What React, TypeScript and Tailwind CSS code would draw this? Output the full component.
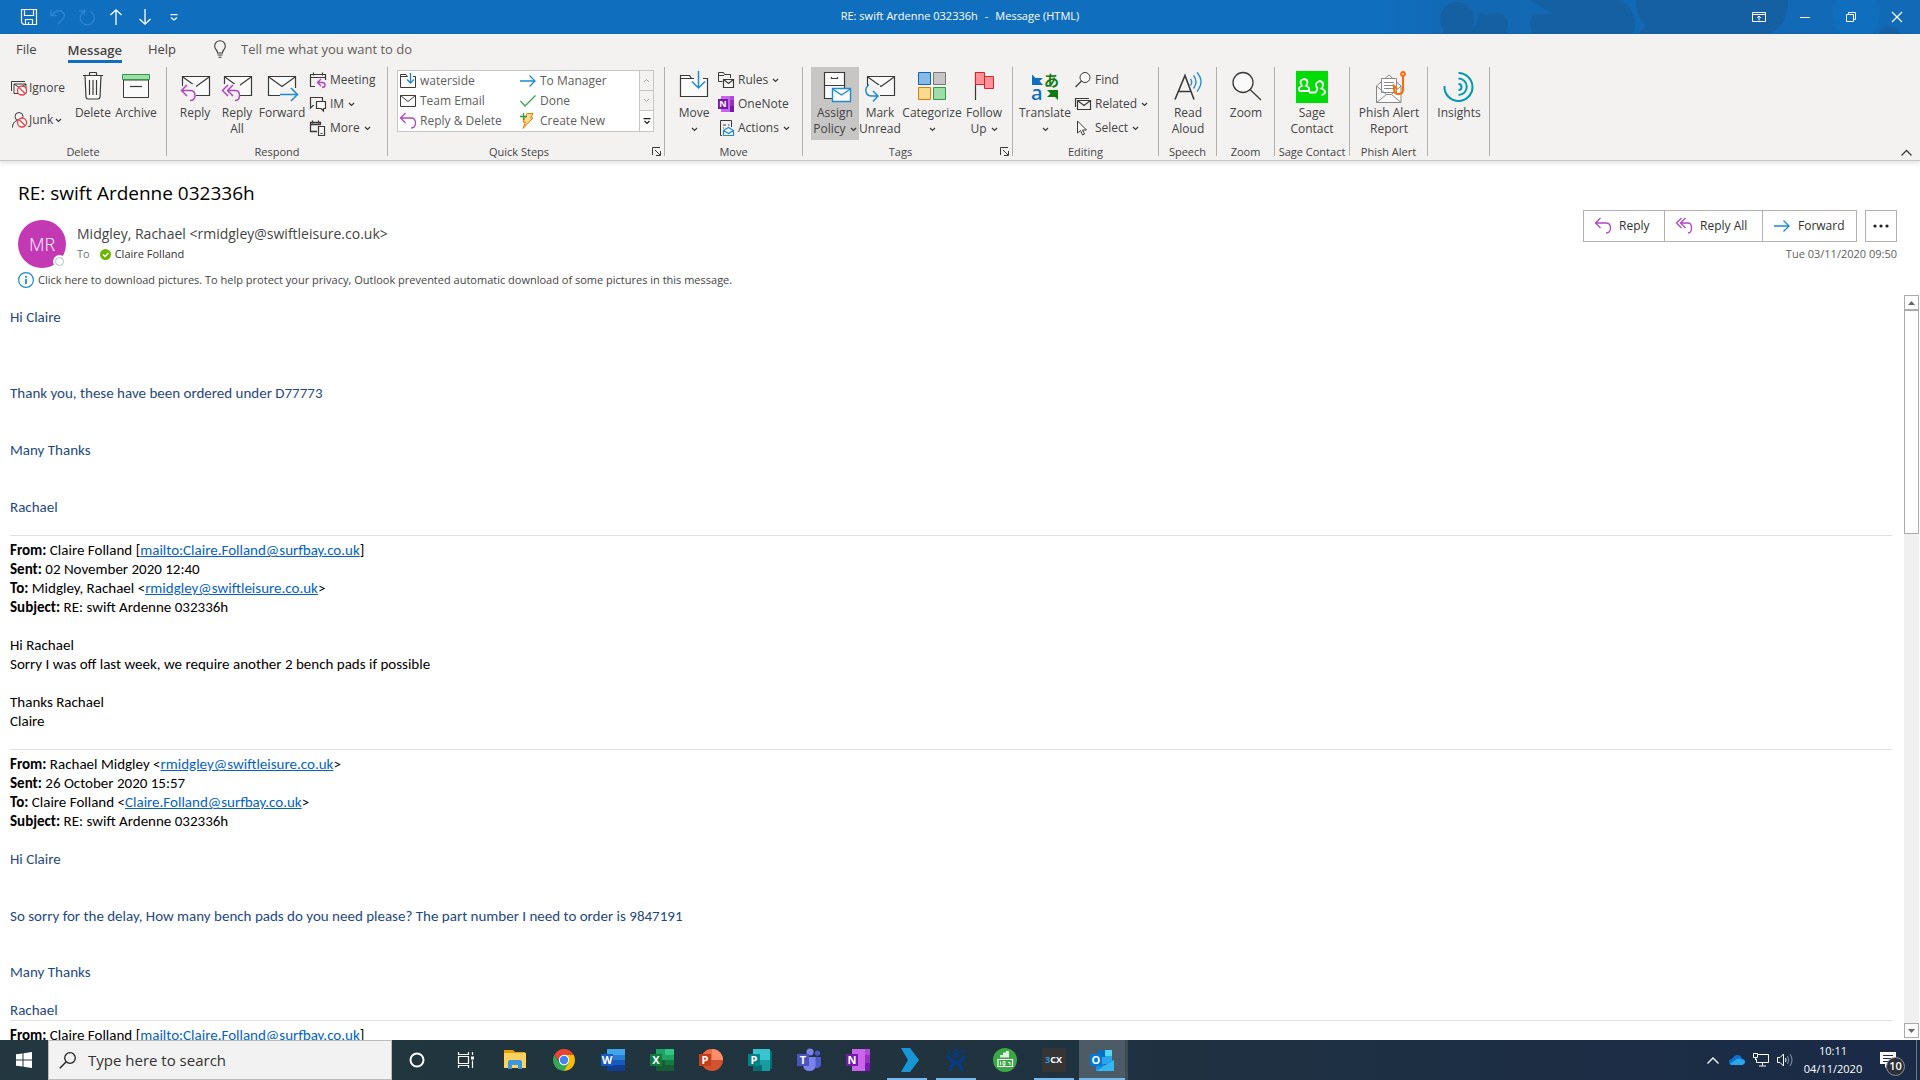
import React from "react";

type Kids = { children?: React.ReactNode };

const INK = "#3b3a39";
const PURPLE = "#b146c2";
const BLUE = "#1e8bcd";

function Svg({ w, h, children }: { w: number; h: number } & Kids) {
  return (
    <svg width={w} height={h} viewBox={`0 0 ${w} ${h}`} fill="none" className="shrink-0 overflow-visible" aria-hidden="true">
      {children}
    </svg>
  );
}

function Chevron() {
  return (
    <Svg w={7} h={5}>
      <path d="M1 1l2.500 2.500L6 1" stroke={INK} strokeWidth="1.2" />
    </Svg>
  );
}

/* ---------- large ribbon icons (32 x 32) ---------- */

const TrashIcon = () => (
  <Svg w={32} h={32}>
    <path d="M8 5.500h16l-1 20.500q-.2 2-2 2H11q-1.800 0-2-2z" fill="#fafafa" />
    <path d="M6 4.500h20M12.500 4V2q0-.5.500-.5h6q.5 0 .5.500v2M8 5l1 21q.2 2 2 2h10q1.800 0 2-2l1-21M12.500 9v15M16 9v15M19.500 9v15" stroke={INK} strokeWidth="1.200" />
  </Svg>
);
const ArchiveIcon = () => (
  <Svg w={32} h={32}>
    <path d="M3.500 9h25v17.500h-25z" fill="#fafafa" stroke={INK} />
    <path d="M2.500 3.500h27v5h-27z" fill="#a0dca7" stroke="#2e9a47" />
    <path d="M10 15.500h12" stroke={INK} strokeWidth="1.200" />
  </Svg>
);
const EnvelopeBig = ({ x = 3 }: { x?: number }) => (
  <g transform={`translate(${x} 5)`}>
    <path d="M.5.500h27v19H.500z" fill="#fafafa" stroke={INK} strokeWidth="1.200" />
    <path d="M.5.800L14 10.500 27.500.800" stroke={INK} strokeWidth="1.200" />
  </g>
);
const ReplyBig = () => (
  <Svg w={32} h={32}>
    <EnvelopeBig />
    <path d="M0 13h17v17H0z" fill="#f3f2f1" />
    <path d="M3.500 13v2M17 24.500h3" stroke={INK} />
    <path d="M8 14l-5.500 5.500L8 25M2.500 19.500H11q5 0 5 5t-5 5" stroke={PURPLE} strokeWidth="1.500" />
  </Svg>
);
const ReplyAllBig = () => (
  <Svg w={32} h={32}>
    <EnvelopeBig />
    <path d="M0 13h19v17H0z" fill="#f3f2f1" />
    <path d="M7 14l-5.500 5.500L7 25M12 14l-5.500 5.500L12 25M6.500 19.500H14q4.500 0 4.500 5t-4.500 5" stroke={PURPLE} strokeWidth="1.500" />
  </Svg>
);
const ForwardBig = () => (
  <Svg w={32} h={32}>
    <EnvelopeBig x={2} />
    <path d="M14 17h18v14H14z" fill="#f3f2f1" />
    <path d="M29.500 13v4M2 24.500h12" stroke={INK} />
    <path d="M14 23.500h17M25 17l6.500 6.500L25 30" stroke={BLUE} strokeWidth="1.500" />
  </Svg>
);
const MoveBig = () => (
  <Svg w={32} h={32}>
    <path d="M2.500 25.500v-21h9l2 3h16v18z" fill="#fafafa" stroke={INK} strokeWidth="1.200" />
    <path d="M2.500 7.500h11" stroke={INK} />
    <path d="M16 4h9v4h-9z" fill="#f3f2f1" />
    <path d="M20.500 0v17M14 10.500l6.500 6.500 6.500-6.500" stroke={BLUE} strokeWidth="1.500" />
  </Svg>
);
const PolicyBig = () => (
  <Svg w={32} h={32}>
    <path d="M5.500 1.500h20v26h-20zM5.500 14.500h20" fill="#fafafa" stroke={INK} strokeWidth="1.200" />
    <path d="M12.500 6v1.500h6V6" stroke={INK} strokeWidth="1.200" />
    <path d="M13.500 17.500h18v13h-18z" fill="#fafafa" stroke={BLUE} strokeWidth="1.400" />
    <path d="M13.500 18l9 6 9-6" stroke={BLUE} strokeWidth="1.400" />
  </Svg>
);
const UnreadBig = () => (
  <Svg w={32} h={32}>
    <EnvelopeBig />
    <path d="M0 14h16v18H0z" fill="#f3f2f1" />
    <path d="M3.500 13v3" stroke={INK} />
    <path d="M5 13.500q-4 3.500-3 7.500t6 4h5M9 20l5 5-5 5.500" stroke={BLUE} strokeWidth="1.500" />
  </Svg>
);
const CategorizeBig = () => (
  <Svg w={32} h={32}>
    <path d="M2.500 1.500h12v12h-12z" fill="#83bceb" stroke="#1565a8" />
    <path d="M17.500 1.500h12v12h-12z" fill="#c8c6c4" stroke="#797775" />
    <path d="M2.500 16.500h12v12h-12z" fill="#f8db8f" stroke="#e07b00" />
    <path d="M17.500 16.500h12v12h-12z" fill="#a0dca7" stroke="#2e9a47" />
  </Svg>
);
const FlagBig = () => (
  <Svg w={32} h={32}>
    <path d="M7.500 1v28" stroke={INK} strokeWidth="1.200" />
    <path d="M7.500 1.500h9v4h9v12h-9v-4h-9zM16.500 5v9" fill="#ff9199" stroke="#d9222a" />
  </Svg>
);
const TranslateBig = () => (
  <Svg w={32} h={32}>
    <path d="M3 3.500l3.500 3.500H14l-3.500 3L14 14H3z" fill="#106ebe" />
    <path d="M18 19h11v10l-3-3h-8l3.500-3.500z" fill="#107c10" />
    <text x="2" y="29" fontSize="20" fontWeight="600" fill="#106ebe" fontFamily="Open Sans, sans-serif">a</text>
    <text x="15" y="15" fontSize="15" fontWeight="700" fill="#107c10" fontFamily="Noto Sans CJK JP, sans-serif">あ</text>
  </Svg>
);
const ReadAloudBig = () => (
  <Svg w={32} h={32}>
    <path d="M3 28.500L13 4.500l9 24M6.500 20.500h12.500" stroke={INK} strokeWidth="1.600" />
    <path d="M18.500 8q2.500 3 0 6.500M21.500 4.500q5 6 0 13M25 1.500q8 9 0 19" stroke={BLUE} strokeWidth="1.300" />
  </Svg>
);
const ZoomBig = () => (
  <Svg w={32} h={32}>
    <circle cx="13" cy="11.500" r="10" fill="#fafafa" stroke={INK} strokeWidth="1.300" />
    <path d="M20 18.500L31 29" stroke={INK} strokeWidth="1.300" />
  </Svg>
);
const SageBig = () => (
  <Svg w={32} h={32}>
    <path d="M0 0h32v32H0z" fill="#00dc06" />
    <path d="M3 20v-2.500q0-1.500 3-2.500-1.500-2-1.500-4T8 8q3.500.5 3.500 3T10 15q3 1 3 2.500V20H3M13 21.500h6.500q1.500-2 2-4-1.500-2-1.500-4t3.500-3.500q3.500.5 3.500 3.500t-1.500 4q3.500 1.500 3.500 3.500T25.500 24" stroke="#fff" strokeWidth="1.800" />
  </Svg>
);
const PhishBig = () => (
  <Svg w={32} h={32}>
    <path d="M3.500 15L16 4l12 11v16.500H3.500z" fill="#fafafa" stroke="#8a8886" />
    <path d="M8.500 7.500h15v14h-15z" fill="#fff" stroke="#8a8886" />
    <path d="M11 11.500h10M11 14.500h10M11 17.500h10M3.500 15l10 8.500h5l9.500-8.500M3.500 31.500l10-8M28 31.500l-9.500-8" stroke="#8a8886" />
    <circle cx="30" cy="3" r="2" stroke="#ff6a00" strokeWidth="1.800" />
    <path d="M30 5v13.500q0 4.500-4.500 4.500T21 18.500V15l3 3" stroke="#ff6a00" strokeWidth="2" />
  </Svg>
);
const InsightsBig = () => (
  <Svg w={32} h={32}>
    <path d="M1.500 15A14 14 0 1 0 15.500 2" stroke="#0099b0" strokeWidth="2" />
    <path d="M15.500 7.500a8 8 0 0 1 0 16.500M15.500 13a3 3 0 0 1 0 6" stroke="#0099b0" strokeWidth="2" />
  </Svg>
);

/* ---------- small icons (16 x 16) ---------- */

const Ban = () => (
  <g>
    <circle cx="11" cy="10.500" r="4.500" fill="#fafafa" stroke="#e8404a" strokeWidth="1.300" />
    <path d="M8 7.500l6 6" stroke="#e8404a" strokeWidth="1.300" />
  </g>
);
const IgnoreIcon = () => (
  <Svg w={16} h={16}>
    <path d="M.5 11V1.500H14M3 13.500V4h12v9.500zM3 4l6 4 6-4" stroke={INK} />
    <Ban />
  </Svg>
);
const JunkIcon = () => (
  <Svg w={16} h={16}>
    <circle cx="8" cy="4.500" r="4" stroke={INK} />
    <path d="M1.500 15.500q0-5.500 4.500-7" stroke={INK} />
    <Ban />
  </Svg>
);
const MeetingIcon = () => (
  <Svg w={16} h={16}>
    <path d="M5 14.500H.5v-12h15V8M.500 5.500h15M3.500.500v3M12.500.500v3" stroke={INK} strokeWidth="1.200" />
    <path d="M11 7l-3.500 3.500L11 14M8 10.500h4q3 0 3 2.500t-3 2.500" stroke={PURPLE} strokeWidth="1.400" />
  </Svg>
);
const ImIcon = () => (
  <Svg w={16} h={16}>
    <path d="M4 9.500H3L.5 12V1.500h12V5" stroke={INK} strokeWidth="1.200" />
    <path d="M6.500 5.500h9v7h-2V15L11 12.500H6.500z" fill="#fafafa" stroke={INK} strokeWidth="1.200" />
  </Svg>
);
const MoreIcon = () => (
  <Svg w={16} h={16}>
    <path d="M7 11.500H.5v-9h10V5M.500 4.500h10M2.500.500v3M8.500.500v3" stroke={INK} strokeWidth="1.300" />
    <path d="M8.500 6.500h6v9h-6zM10.500 13.500h2" fill="#fafafa" stroke={INK} strokeWidth="1.200" />
  </Svg>
);
const FolderSmall = () => (
  <Svg w={16} h={16}>
    <path d="M7.500 3.500L6 1.500H.500v13h15V3.500H13M.500 3.500h7" stroke={INK} />
    <path d="M10.500 0v10M7 6.500l3.500 3.500L14 6.500" stroke={BLUE} strokeWidth="1.400" />
  </Svg>
);
const MailSmall = () => (
  <Svg w={16} h={12}>
    <path d="M.5.500h15v11H.500zM.500.500L8 6.500l7.500-6" stroke={INK} />
  </Svg>
);
const ReplySmall = () => (
  <Svg w={16} h={16}>
    <path d="M5.500 0l-5 5 5 5M.500 5H11q4.500 0 4.500 5t-4.500 5" stroke={PURPLE} strokeWidth="1.300" />
  </Svg>
);
const ReplyAllSmall = () => (
  <Svg w={16} h={16}>
    <path d="M5.500 0l-5 5 5 5M9.500 0l-5 5 5 5M4.500 5H12q3.500 0 3.500 5t-3.500 5" stroke={PURPLE} strokeWidth="1.300" />
  </Svg>
);
const ArrowSmall = () => (
  <Svg w={16} h={12}>
    <path d="M0 6h15M9.500.500L15 6l-5.500 5.500" stroke={BLUE} strokeWidth="1.300" />
  </Svg>
);
const CheckSmall = () => (
  <Svg w={16} h={12}>
    <path d="M.5 6L5 11 15.500.500" stroke="#3aa655" strokeWidth="1.300" />
  </Svg>
);
const BoltSmall = () => (
  <Svg w={16} h={16}>
    <path d="M7 .5h6L10.500 5H13L3 15.500 5.500 9H3z" fill="#fbdc8e" stroke="#e87a00" />
    <path d="M0 3.500h7M3.500 0v7" stroke="#2e9a47" strokeWidth="1.300" />
  </Svg>
);
const RulesIcon = () => (
  <Svg w={16} h={16}>
    <path d="M4.500 9.500h-4v-9h5l1 2h6V6M.500 3.500H6" stroke={INK} />
    <path d="M5.500 7.500h10v8h-10zM5.500 7.500l5 4 5-4" fill="#fafafa" stroke={INK} strokeWidth="1.200" />
  </Svg>
);
const ActionsIcon = () => (
  <Svg w={16} h={16}>
    <path d="M4 15.500H2.500V.500h11V7M5 5h3M10 5h1.500M5 8h1" stroke={INK} />
    <path d="M5.500 10.500l5-3 5 3v5h-10zM5.500 10.500l5 3 5-3" fill="#fafafa" stroke={BLUE} strokeWidth="1.200" />
  </Svg>
);
const FindIcon = () => (
  <Svg w={16} h={16}>
    <circle cx="10" cy="5.500" r="5" fill="#fafafa" stroke={INK} />
    <path d="M6.500 9L.500 15" stroke={INK} strokeWidth="1.200" />
  </Svg>
);
const RelatedIcon = () => (
  <Svg w={16} h={16}>
    <path d="M.5 11V2.500H14M2.500 13.500v-9h13v9zM2.500 4.500l6.500 5 6.500-5" stroke={INK} strokeWidth="1.200" />
  </Svg>
);
const SelectIcon = () => (
  <Svg w={16} h={16}>
    <path d="M2.500 1v12l3-2.500L7.500 15l2-1-2-4h4z" fill="#fafafa" stroke={INK} />
  </Svg>
);
function OfficeIcon({ letter, badge, children }: { letter: string; badge: string } & Kids) {
  return (
    <Svg w={26} h={24}>
      {children}
      <path d="M1 6h12v12H1z" fill={badge} />
      <text x="7" y="16" textAnchor="middle" fontSize="11" fontWeight="700" fill="#fff" fontFamily="Open Sans, sans-serif">
        {letter}
      </text>
    </Svg>
  );
}
const OneNoteSmall = () => (
  <Svg w={16} h={16}>
    <path d="M3 0h13v16H3z" fill="#ca64ea" />
    <path d="M12 0h4v4h-4z" fill="#ae4bd5" />
    <path d="M12 4h4v6h-4z" fill="#9332bf" />
    <path d="M12 10h4v6h-4z" fill="#7719aa" />
    <path d="M0 3h10v10H0z" fill="#7719aa" />
    <text x="5" y="11" textAnchor="middle" fontSize="9" fontWeight="700" fill="#fff" fontFamily="Open Sans, sans-serif">N</text>
  </Svg>
);

/* ---------- ribbon building blocks ---------- */

function Group({ label, launcher, className, children }: { label: string; launcher?: boolean; className: string } & Kids) {
  return (
    <section aria-label={label || "Insights"} className={`flex shrink-0 items-start ${className}`}>
      <div className="flex h-[92px] min-w-0 flex-1 flex-col">
        <div className="flex h-[77px] pl-1">{children}</div>
        <div className="flex h-[15px] items-center text-[11px] leading-[15px] text-[#444]">
          <span className="flex flex-1 justify-center whitespace-nowrap">{label}</span>
          {launcher && (
            <button aria-label={`${label} options`} className="mr-0.5 flex w-3 justify-center">
              <Svg w={9} h={9}>
                <path d="M.5 8V.500H8M3 3l5 5M8.500 4v4.500H4" stroke={INK} />
              </Svg>
            </button>
          )}
        </div>
      </div>
      <div className="h-[89px] w-px bg-[#b3b0ad]" />
    </section>
  );
}

function Big({ icon, a, b, drop, active, className }: { icon: React.ReactNode; a: string; b?: string; drop?: boolean; active?: boolean; className: string }) {
  return (
    <button className={`flex h-[73px] shrink-0 flex-col items-center pt-1 text-[12px] leading-4 whitespace-nowrap ${active ? "bg-[#c8c6c4]" : ""} ${className}`}>
      {icon}
      <span className="mt-0.5">{a}</span>
      <span className="flex h-4 items-center gap-1">
        {b}
        {drop && <Chevron />}
      </span>
    </button>
  );
}

function Small({ icon, text, drop, tall }: { icon: React.ReactNode; text: string; drop?: boolean; tall?: boolean }) {
  return (
    <button className={`flex items-center text-[12px] whitespace-nowrap ${tall ? "h-8 gap-0.5" : "h-6 gap-1"}`}>
      {icon}
      <span>{text}</span>
      {drop && <Chevron />}
    </button>
  );
}

function Step({ icon, text }: { icon: React.ReactNode; text: string }) {
  return (
    <button className="flex h-5 items-center gap-1 text-[12px] leading-5 whitespace-nowrap text-[#605e5c]">
      {icon}
      <span>{text}</span>
    </button>
  );
}

function TitleArt() {
  return (
    <svg className="absolute top-0 right-0 h-full w-[540px]" viewBox="0 0 540 34" aria-hidden="true">
      <defs>
        <linearGradient id="fade" x1="0" x2="1">
          <stop offset="0" stopColor="#1464ac" stopOpacity="0" />
          <stop offset=".15" stopColor="#1464ac" stopOpacity=".6" />
          <stop offset="1" stopColor="#1464ac" stopOpacity=".4" />
        </linearGradient>
      </defs>
      <path d="M0 0h540v34H0z" fill="url(#fade)" />
      <g fill="#1560a3">
        <circle cx="77" cy="19" r="17" />
        <path d="M62 34l4-8h30l2-12q6-2 8 1l4-2h10q8 2 8 12l-2 9z" />
        <path d="M152 34q-6-20 6-20h14L150 0h90q14 8 15 20t-4 14z" />
        <path d="M256 0h152q0 20-10 28t-18 6H258l8-8q-10-8-10-26z" />
      </g>
      <circle cx="476" cy="15" r="24" fill="#106ebe" />
      <circle cx="509" cy="37" r="11" fill="#1560a3" />
    </svg>
  );
}

/* ---------- message ---------- */

function MailLink({ href, children }: { href: string } & Kids) {
  return (
    <a href={href} className="text-[#0563c1] underline">
      {children}
    </a>
  );
}

function Quoted({ from, sent, to, subject }: { from: React.ReactNode; sent: string; to: React.ReactNode; subject: string }) {
  return (
    <div className="border-t border-[#e1e1e1] pt-[5px]">
      <p><b>From:</b> {from}</p>
      <p><b>Sent:</b> {sent}</p>
      <p><b>To:</b> {to}</p>
      <p><b>Subject:</b> {subject}</p>
    </div>
  );
}

const SURFBAY = "mailto:Claire.Folland@surfbay.co.uk";
const SWIFT = "mailto:rmidgley@swiftleisure.co.uk";

function MessageBody() {
  return (
    <article className="min-w-0 flex-1 overflow-hidden pt-[14px] pr-3 pl-[10px] font-[Carlito,Lato,sans-serif] text-[15px] leading-[19px] text-black">
      <div className="text-[#1f497d]">
        <p>Hi Claire</p>
        <p className="mt-[57px]">Thank you, these have been ordered under D77773</p>
        <p className="mt-[38px]">Many Thanks</p>
        <p className="mt-[38px] mb-[18px]">Rachael</p>
      </div>
      <Quoted
        from={<>Claire Folland [<MailLink href={SURFBAY}>mailto:Claire.Folland@surfbay.co.uk</MailLink>]</>}
        sent="02 November 2020 12:40"
        to={<>Midgley, Rachael &lt;<MailLink href={SWIFT}>rmidgley@swiftleisure.co.uk</MailLink>&gt;</>}
        subject="RE: swift Ardenne 032336h"
      />
      <p className="mt-[19px]">Hi Rachael</p>
      <p>Sorry I was off last week, we require another 2 bench pads if possible</p>
      <p className="mt-[19px]">Thanks Rachael</p>
      <p className="mb-[18px]">Claire</p>
      <Quoted
        from={<>Rachael Midgley &lt;<MailLink href={SWIFT}>rmidgley@swiftleisure.co.uk</MailLink>&gt;</>}
        sent="26 October 2020 15:57"
        to={<>Claire Folland &lt;<MailLink href={SURFBAY}>Claire.Folland@surfbay.co.uk</MailLink>&gt;</>}
        subject="RE: swift Ardenne 032336h"
      />
      <div className="text-[#1f497d]">
        <p className="mt-[19px]">Hi Claire</p>
        <p className="mt-[38px]">So sorry for the delay, How many bench pads do you need please? The part number I need to order is 9847191</p>
        <p className="mt-[37px]">Many Thanks</p>
        <p className="mt-[19px]">Rachael</p>
      </div>
      <Quoted
        from={<>Claire Folland [<MailLink href={SURFBAY}>mailto:Claire.Folland@surfbay.co.uk</MailLink>]</>}
        sent="26 October 2020 15:40"
        to={<>Rachael Midgley</>}
        subject="swift Ardenne 032336h"
      />
    </article>
  );
}

function ScrollBar() {
  return (
    <div className="mt-px mb-0.5 flex w-[15px] shrink-0 flex-col bg-[#f0f0f0]">
      <button aria-label="Scroll up" className="flex h-[15px] items-center justify-center border border-[#ababab] bg-white">
        <Svg w={7} h={4}><path d="M0 4L3.500 0 7 4z" fill="#666" /></Svg>
      </button>
      <div className="h-[224px] border border-[#ababab] bg-white" />
      <div className="flex-1" />
      <button aria-label="Scroll down" className="flex h-[15px] items-center justify-center border border-[#ababab] bg-white">
        <Svg w={7} h={4}><path d="M0 0l3.500 4L7 0z" fill="#666" /></Svg>
      </button>
    </div>
  );
}

/* ---------- taskbar ---------- */

function Task({ label, open, active, children }: { label: string; open?: boolean; active?: boolean } & Kids) {
  return (
    <button
      aria-label={label}
      className={`flex h-10 w-[49px] flex-col items-center ${active ? "ml-px border-r-[3px] border-[#3d4d56] bg-[#4c5b66]" : ""}`}
    >
      <span className="flex flex-1 items-center">{children}</span>
      {(open || active) && <span className={`-mt-0.5 h-0.5 bg-[#76b9ed] ${active ? "w-full" : "w-10"}`} />}
    </button>
  );
}

function Taskbar() {
  return (
    <footer className="flex h-10 shrink-0 items-stretch bg-linear-to-r from-[#22373f] via-[#20333f] to-[#1a2a47] text-white">
      <button aria-label="Start" className="flex w-12 items-center justify-center">
        <Svg w={16} h={16}>
          <path d="M0 2.300L6.500 1.400v6.100H0zM7.500 1.200L16 0v7.500H7.500zM0 8.500h6.500v6.100L0 13.700zM7.500 8.500H16V16l-8.500-1.200z" fill="#fff" />
        </Svg>
      </button>
      <label className="flex w-[344px] items-center gap-3 border border-[#bdbdbd] bg-[#f2f2f2] pl-[10px] text-[#222]">
        <Svg w={17} h={17}>
          <circle cx="11" cy="6" r="5.300" stroke="#222" strokeWidth="1.300" />
          <path d="M7 10L.800 16.200" stroke="#222" strokeWidth="1.400" />
        </Svg>
        <input aria-label="Search" placeholder="Type here to search" className="w-60 bg-transparent text-[15px] outline-none placeholder:text-[#333]" />
      </label>
      <Task label="Cortana">
        <Svg w={18} h={18}><circle cx="9" cy="9" r="6.500" stroke="#fff" strokeWidth="2" /></Svg>
      </Task>
      <Task label="Task View">
        <Svg w={16} h={16}>
          <path d="M.5 0v2.500h10V0M.500 4.500h10v7H.500zM.500 16v-2.500h10V16M14.500 0v3M14.500 8.500V16" stroke="#fff" strokeWidth="1.200" />
          <path d="M13 4.500h3v3h-3z" fill="#fff" />
        </Svg>
      </Task>
      <Task label="File Explorer">
        <Svg w={22} h={20}>
          <path d="M0 0h9l2 2h10v2H0z" fill="#e8a200" />
          <path d="M0 3h22v15H0z" fill="#fbd264" />
          <path d="M4 19v-7q0-2 2-2h10q2 0 2 2v7h-4v-4H8v4z" fill="#3a96dd" />
        </Svg>
      </Task>
      <Task label="Chrome">
        <Svg w={24} h={24}>
          <path d="M12 12V6.500h9.500A11 11 0 0 1 12 23z" fill="#fbbc05" />
          <path d="M12 12l-4.700 2.700L2.500 6.500A11 11 0 0 0 12 23l4.800-8.300z" fill="#34a853" />
          <path d="M2.500 6.500A11 11 0 0 1 21.500 6.500H12L7.300 14z" fill="#ea4335" />
          <circle cx="12" cy="12" r="5.200" fill="#fff" />
          <circle cx="12" cy="12" r="4.200" fill="#4285f4" />
        </Svg>
      </Task>
      <Task label="Word">
        <OfficeIcon letter="W" badge="#185abd">
          <path d="M7 1h18v6H7z" fill="#41a5ee" /><path d="M7 7h18v5H7z" fill="#2b7cd3" />
          <path d="M7 12h18v5H7z" fill="#185abd" /><path d="M7 17h18v6H7z" fill="#103f91" />
        </OfficeIcon>
      </Task>
      <Task label="Excel">
        <OfficeIcon letter="X" badge="#107c41">
          <path d="M7 1h18v22H7z" fill="#21a366" /><path d="M16 1h9v6h-9z" fill="#33c481" />
          <path d="M16 12h9v5h-9z" fill="#107c41" /><path d="M7 12h9v11H7z" fill="#185c37" /><path d="M7 17h18v6H7z" fill="#185c37" />
        </OfficeIcon>
      </Task>
      <Task label="PowerPoint">
        <OfficeIcon letter="P" badge="#c43e1c">
          <circle cx="14" cy="12" r="11" fill="#d35230" /><path d="M14 1a11 11 0 0 1 11 11H14z" fill="#ff8f6b" /><path d="M14 1v11H3A11 11 0 0 1 14 1z" fill="#ed6c47" />
        </OfficeIcon>
      </Task>
      <Task label="Publisher">
        <OfficeIcon letter="P" badge="#038387">
          <path d="M14 3h11v18H14z" fill="#037074" /><path d="M6 1h17v11H6z" fill="#37c6d0" />
          <path d="M6 12h17v11H6z" fill="#1a9ba1" /><path d="M6 17h9v6H6z" fill="#036f73" />
        </OfficeIcon>
      </Task>
      <Task label="Teams">
        <OfficeIcon letter="T" badge="#4b53bc">
          <circle cx="21.500" cy="5" r="2.600" fill="#5059c9" /><circle cx="14" cy="4" r="3.600" fill="#7b83eb" />
          <path d="M17 9h8v7q0 4-4 4h-4z" fill="#5059c9" /><path d="M7 9h12.500v8q0 6-6 6T7 17z" fill="#7b83eb" />
        </OfficeIcon>
      </Task>
      <Task label="OneNote">
        <OfficeIcon letter="N" badge="#7719aa">
          <path d="M7 1h18v22H7z" fill="#ca64ea" /><path d="M20 1h5v6h-5z" fill="#ae4bd5" />
          <path d="M20 7h5v8h-5z" fill="#9332bf" /><path d="M20 15h5v8h-5z" fill="#7719aa" />
        </OfficeIcon>
      </Task>
      <Task label="Remote support" open>
        <Svg w={24} h={24}><path d="M6 0h9l9 12-9 12H6l7-12z" fill="#1797d8" /></Svg>
      </Task>
      <Task label="Jira" open>
        <Svg w={20} h={24}>
          <g fill="#063c80">
            <circle cx="3.500" cy="3.500" r="1.800" /><circle cx="10" cy="2" r="1.800" /><circle cx="16.500" cy="3.500" r="1.800" />
            <circle cx="10" cy="7" r="2.800" />
          </g>
          <path d="M2 7q1 6 8 7t8-7M10 14q-5 3-6 9M10 14q5 3 6 9" stroke="#063c80" strokeWidth="3.400" />
        </Svg>
      </Task>
      <Task label="Sage">
        <Svg w={24} h={24}>
          <circle cx="12" cy="12" r="12" fill="#3aa845" />
          <path d="M7 9.500V7h3V4.500h3V3h3v6.500z" fill="#fff" opacity=".85" />
          <path d="M5 11.500h14.500v7H5z" stroke="#fff" strokeWidth="1.200" />
          <path d="M7.500 17v-3.500M10 17v-3.500h2V17zM15 14.500h2V17" stroke="#fff" />
        </Svg>
      </Task>
      <Task label="3CX" open>
        <span className="flex size-6 items-center justify-center bg-[#373435] text-[9px] font-bold">
          <span className="text-[#2b9ad6]">3</span>CX
        </span>
      </Task>
      <Task label="Outlook" active>
        <OfficeIcon letter="O" badge="#0078d4">
          <path d="M9 2h14v14H9z" fill="#28a8ea" /><path d="M9 2h7v7H9z" fill="#0f6cbd" /><path d="M16 2h7v6h-7z" fill="#50d9ff" />
          <path d="M7 12l9 5 9-5v11H7z" fill="#1490df" /><path d="M7 23l18-11v11z" fill="#35b8f1" />
        </OfficeIcon>
      </Task>

      <div className="ml-auto flex items-center">
        <button aria-label="Show hidden icons" className="flex w-6 justify-center">
          <Svg w={12} h={7}><path d="M.5 6.500L6 1l5.500 5.500" stroke="#fff" strokeWidth="1.300" /></Svg>
        </button>
        <button aria-label="OneDrive" className="flex w-6 justify-center">
          <Svg w={16} h={10}>
            <path d="M3 4q2-4 5.500-4T13 3.500q3 .5 3 3T13 10H3.500Q0 10 0 7t3-3z" fill="#0f6fd0" />
            <path d="M1 9l7-5q2-1 5 .500Q16 5 16 7t-3 3H3.500Q2 10 1 9z" fill="#28a8ea" />
          </Svg>
        </button>
        <button aria-label="Network" className="flex w-6 justify-center">
          <Svg w={16} h={14}>
            <path d="M5 1.500h10.500v8H3.500V6M9.500 9.500v3M6 13h7M.500.500h4v4h-4zM2.500 4.500V7" stroke="#fff" />
          </Svg>
        </button>
        <button aria-label="Volume" className="flex w-6 justify-center">
          <Svg w={16} h={14}>
            <path d="M.5 4.500H3L6.500 1v12L3 9.500H.500z" stroke="#fff" />
            <path d="M8.500 5q1 2 0 4" stroke="#fff" />
            <path d="M10.500 3q2.500 4 0 8M13 1q4 6 0 12" stroke="#8794a5" />
          </Svg>
        </button>
        <div className="w-[72px] text-center text-[11px] leading-[18px]">
          <div>10:11</div>
          <div>04/11/2020</div>
        </div>
        <button aria-label="10 notifications" className="relative flex h-10 w-[38px] items-center justify-center">
          <Svg w={16} h={16}>
            <path d="M0 0h16v12H9l-4 4v-4H0z" fill="#fff" />
            <path d="M3 3.500h10M3 6.500h10M3 9.500h7" stroke="#1a2a47" />
          </Svg>
          <span className="absolute right-0.5 bottom-1 flex size-[19px] items-center justify-center rounded-full border border-[#8a8f98] bg-[#2b2f36] text-[11px] font-semibold">
            10
          </span>
        </button>
        <div className="ml-[9px] h-full w-1 border-l border-[#6c7687]" />
      </div>
    </footer>
  );
}

const ACTION = "flex h-8 items-center gap-2 border border-[#b3b0ad] bg-white pl-[11px]";

export default function App() {
  return (
    <div className="flex h-screen flex-col overflow-hidden bg-white font-['Open_Sans','Noto_Sans',sans-serif] text-[12px] text-[#444]">
      <header className="relative grid h-[34px] shrink-0 grid-cols-[1fr_auto_1fr] items-center bg-[#106ebe] text-white">
        <TitleArt />
        <div className="relative flex items-center pl-[14px]">
          <button aria-label="Save" className="flex w-[29px] justify-center">
            <Svg w={16} h={16}>
              <path d="M.5.500h15v15H2.500l-2-2zM3.500.500v6h9v-6M4.500 15.500v-5h7v5M7.500 13v2" stroke="#fff" strokeWidth="1.200" />
            </Svg>
          </button>
          <button aria-label="Undo" className="flex w-[29px] justify-center">
            <Svg w={16} h={16}><path d="M1 1v5.500h5.500M1.500 6Q8-.500 12.500 3t-1 8.500L7.500 15.500" stroke="#2f84d4" strokeWidth="1.300" /></Svg>
          </button>
          <button aria-label="Redo" className="flex w-[29px] justify-center">
            <Svg w={16} h={16}><path d="M0 2h6M5.500 0v6M5 2.500A7 7 0 1 0 11.500 2.500" stroke="#2f84d4" strokeWidth="1.300" /></Svg>
          </button>
          <button aria-label="Previous item" className="flex w-[29px] justify-center">
            <Svg w={12} h={16}><path d="M6 16V1M.500 6L6 .800 11.500 6" stroke="#fff" strokeWidth="1.300" /></Svg>
          </button>
          <button aria-label="Next item" className="flex w-[29px] justify-center">
            <Svg w={12} h={16}><path d="M6 0v15M.500 10L6 15.200 11.500 10" stroke="#fff" strokeWidth="1.300" /></Svg>
          </button>
          <button aria-label="Customize toolbar" className="flex w-[29px] justify-center">
            <Svg w={8} h={7}><path d="M.5.700h7M1 3.500L4 6l3-2.500" stroke="#fff" strokeWidth="1.300" /></Svg>
          </button>
        </div>
        <h1 className="relative flex gap-[7px] pb-0.5 text-[11px]">
          <span>RE: swift Ardenne 032336h</span>
          <span>-</span>
          <span>Message (HTML)</span>
        </h1>
        <div className="relative flex justify-end">
          <button aria-label="Ribbon display options" className="flex h-8 w-[46px] items-center justify-center">
            <Svg w={14} h={10}><path d="M.5.500h13v9H.500zM.500 2.500h13M7 8.500V4M5 6l2-2 2 2" stroke="#fff" /></Svg>
          </button>
          <button aria-label="Minimize" className="flex h-8 w-[46px] items-center justify-center">
            <Svg w={10} h={10}><path d="M0 5.500h10" stroke="#fff" /></Svg>
          </button>
          <button aria-label="Restore" className="flex h-8 w-[46px] items-center justify-center">
            <Svg w={10} h={10}><path d="M.5 2.500h7v7h-7zM2.500 2.500v-2h7v7h-2" stroke="#fff" /></Svg>
          </button>
          <button aria-label="Close" className="flex h-8 w-[46px] items-center justify-center">
            <Svg w={10} h={10}><path d="M0 0l10 10M10 0L0 10" stroke="#fff" strokeWidth="1.200" /></Svg>
          </button>
        </div>
      </header>

      <div className="relative shrink-0 border-b border-[#c8c6c4] bg-[#f3f2f1] shadow-[0_2px_4px_rgba(0,0,0,0.12)]">
        <nav className="flex h-[33px] items-start pt-[5px] text-[13px] leading-5">
          <button className="ml-4">File</button>
          <button className="ml-[31px] h-6 border-b-[3px] border-[#106ebe] font-semibold">Message</button>
          <button className="ml-[26px]">Help</button>
          <label className="ml-[38px] flex items-center gap-[15px]">
            <Svg w={12} h={17}>
              <path d="M3.500 12q0-2-1.500-3.500A5.300 5.300 0 1 1 10 8.500Q8.500 10 8.500 12zM3.500 14h5M4.500 16.200h3" stroke={INK} strokeWidth="1.100" />
            </Svg>
            <input aria-label="Tell me what you want to do" placeholder="Tell me what you want to do" className="w-60 bg-transparent outline-none placeholder:text-[#605e5c]" />
          </label>
        </nav>
        <div className="flex h-[93px] items-start">
          <Group label="Delete" className="w-[167px]">
            <div className="ml-[7px] flex w-[61px] shrink-0 flex-col pt-[5px]">
              <Small tall icon={<IgnoreIcon />} text="Ignore" />
              <Small tall icon={<JunkIcon />} text="Junk" drop />
            </div>
            <Big icon={<TrashIcon />} a="Delete" className="w-[42px]" />
            <Big icon={<ArchiveIcon />} a="Archive" className="w-[44px]" />
          </Group>
          <Group label="Respond" className="w-[221px]">
            <Big icon={<ReplyBig />} a="Reply" className="ml-[3px] w-[42px]" />
            <Big icon={<ReplyAllBig />} a="Reply" b="All" className="w-[42px]" />
            <Big icon={<ForwardBig />} a="Forward" className="w-12" />
            <div className="ml-1 flex flex-col pt-px">
              <Small icon={<MeetingIcon />} text="Meeting" />
              <Small icon={<ImIcon />} text="IM" drop />
              <Small icon={<MoreIcon />} text="More" drop />
            </div>
          </Group>
          <Group label="Quick Steps" launcher className="w-[277px]">
            <div className="mt-[3px] ml-[5px] flex h-[62px] w-[257px] border border-[#c8c6c4] bg-white">
              <div className="grid flex-1 grid-cols-[120px_1fr] content-end pl-0.5">
                <Step icon={<FolderSmall />} text="waterside" />
                <Step icon={<ArrowSmall />} text="To Manager" />
                <Step icon={<MailSmall />} text="Team Email" />
                <Step icon={<CheckSmall />} text="Done" />
                <Step icon={<ReplySmall />} text="Reply & Delete" />
                <Step icon={<BoltSmall />} text="Create New" />
              </div>
              <div className="flex w-[14px] flex-col border-l border-[#c8c6c4] bg-[#f3f2f1]">
                <button aria-label="Previous row" className="flex h-5 items-center justify-center border-b border-[#c8c6c4]">
                  <Svg w={7} h={5}><path d="M1 4l2.500-2.500L6 4" stroke="#a19f9d" /></Svg>
                </button>
                <button aria-label="Next row" className="flex h-5 items-center justify-center border-b border-[#c8c6c4]">
                  <Svg w={7} h={5}><path d="M1 1l2.500 2.500L6 1" stroke="#a19f9d" /></Svg>
                </button>
                <button aria-label="All quick steps" className="flex h-5 items-center justify-center bg-white">
                  <Svg w={8} h={7}><path d="M.5.700h7M1.500 3L4 5.500 6.500 3" stroke="#201f1e" strokeWidth="1.200" /></Svg>
                </button>
              </div>
            </div>
          </Group>
          <Group label="Move" className="w-[138px]">
            <Big icon={<MoveBig />} a="Move" drop className="ml-1 w-[42px]" />
            <div className="ml-[3px] flex flex-col pt-px">
              <Small icon={<RulesIcon />} text="Rules" drop />
              <Small icon={<OneNoteSmall />} text="OneNote" />
              <Small icon={<ActionsIcon />} text="Actions" drop />
            </div>
          </Group>
          <Group label="Tags" launcher className="w-[210px]">
            <Big icon={<PolicyBig />} a="Assign" b="Policy" drop active className="ml-1 w-12" />
            <Big icon={<UnreadBig />} a="Mark" b="Unread" className="w-[42px]" />
            <Big icon={<CategorizeBig />} a="Categorize" drop className="w-[62px]" />
            <Big icon={<FlagBig />} a="Follow" b="Up" drop className="w-[42px]" />
          </Group>
          <Group label="Editing" className="w-[146px]">
            <Big icon={<TranslateBig />} a="Translate" drop className="ml-px w-[54px]" />
            <div className="ml-[3px] flex flex-col pt-px">
              <Small icon={<FindIcon />} text="Find" />
              <Small icon={<RelatedIcon />} text="Related" drop />
              <Small icon={<SelectIcon />} text="Select" drop />
            </div>
          </Group>
          <Group label="Speech" className="w-[58px]">
            <Big icon={<ReadAloudBig />} a="Read" b="Aloud" className="w-[50px]" />
          </Group>
          <Group label="Zoom" className="w-[58px]">
            <Big icon={<ZoomBig />} a="Zoom" className="w-[50px]" />
          </Group>
          <Group label="Sage Contact" className="w-[75px]">
            <Big icon={<SageBig />} a="Sage" b="Contact" className="w-[66px]" />
          </Group>
          <Group label="Phish Alert" className="w-[78px]">
            <Big icon={<PhishBig />} a="Phish Alert" b="Report" className="w-[70px]" />
          </Group>
          <Group label="" className="w-[62px]">
            <Big icon={<InsightsBig />} a="Insights" className="w-[54px]" />
          </Group>
          <button aria-label="Collapse the ribbon" className="mr-2 mb-1 ml-auto self-end">
            <Svg w={11} h={6}><path d="M.5 5.500l5-5 5 5" stroke={INK} strokeWidth="1.300" /></Svg>
          </button>
        </div>
      </div>

      <section className="flex h-[133px] shrink-0 justify-between pt-[18px] pr-[23px] pl-[18px]">
        <div>
          <h2 className="text-[19px] leading-7 text-black">RE: swift Ardenne 032336h</h2>
          <div className="mt-[13px] flex gap-[11px]">
            <div className="relative flex size-12 items-center justify-center rounded-full bg-[#c239b3] text-[18px] font-light text-white">
              MR
              <span className="absolute right-0 bottom-0 size-[13px] rounded-full border-2 border-white bg-white">
                <span className="block size-full rounded-full border border-[#a9bfc4]" />
              </span>
            </div>
            <div>
              <div className="mt-1 text-[14px] leading-5">Midgley, Rachael &lt;rmidgley@swiftleisure.co.uk&gt;</div>
              <div className="mt-0.5 flex items-center text-[11px] leading-4">
                <span className="text-[#767472]">To</span>
                <span className="mr-1 ml-[10px]">
                  <Svg w={11} h={11}>
                    <circle cx="5.500" cy="5.500" r="5.500" fill="#6bb700" />
                    <path d="M3 5.500l2 2 3.500-3.500" stroke="#fff" strokeWidth="1.400" />
                  </Svg>
                </span>
                <span className="text-[#323130]">Claire Folland</span>
              </div>
            </div>
          </div>
          <button className="mt-1 flex items-center gap-1 text-[11px] leading-4">
            <Svg w={16} h={16}>
              <circle cx="8" cy="8" r="7.400" stroke={BLUE} strokeWidth="1.200" />
              <path d="M8 7v5M8 4v1.800" stroke={BLUE} strokeWidth="1.800" />
            </Svg>
            Click here to download pictures. To help protect your privacy, Outlook prevented automatic download of some pictures in this message.
          </button>
        </div>
        <div className="flex flex-col items-end pt-[31px]">
          <div className="flex text-[#323130]">
            <button className={`${ACTION} w-[82px]`}><ReplySmall />Reply</button>
            <button className={`${ACTION} -ml-px w-[99px]`}><ReplyAllSmall />Reply All</button>
            <button className={`${ACTION} -ml-px w-[95px]`}><ArrowSmall />Forward</button>
            <button aria-label="More actions" className="ml-2 flex h-8 w-8 items-center justify-center border border-[#b3b0ad]">
              <Svg w={16} h={4}><g fill="#201f1e"><circle cx="2" cy="2" r="1.600" /><circle cx="8" cy="2" r="1.600" /><circle cx="14" cy="2" r="1.600" /></g></Svg>
            </button>
          </div>
          <time className="mt-1 text-[11px] leading-4 text-[#605e5c]">Tue 03/11/2020 09:50</time>
        </div>
      </section>

      <main className="flex min-h-0 flex-1 pr-px">
        <MessageBody />
        <ScrollBar />
      </main>

      <Taskbar />
    </div>
  );
}
